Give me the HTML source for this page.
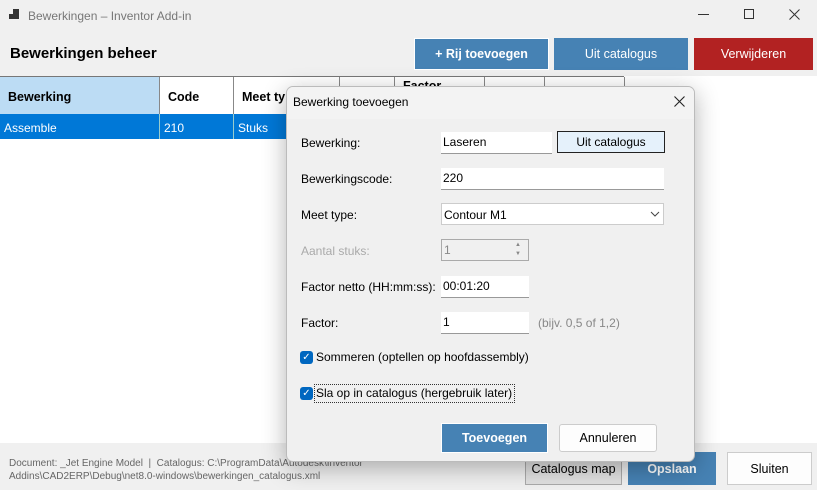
<!DOCTYPE html>
<html><head><meta charset="utf-8"><style>
*{box-sizing:border-box;margin:0;padding:0}
body{width:817px;height:490px;overflow:hidden;background:#f0f0f0;font-family:"Liberation Sans",sans-serif;font-size:12px;color:#000;position:relative}
.a{position:absolute}
.btn{position:absolute;color:#fff;display:flex;align-items:center;justify-content:center;font-size:12.5px}
.field{position:absolute;background:#fff;border-bottom:1px solid #999;padding:3px 2px;font-size:12px;height:22px}
.lbl{position:absolute;left:301px;font-size:12px}
.cb{position:absolute;left:300px;width:13px;height:13px;background:#0067c0;border-radius:3px;color:#fff;font-size:10px;line-height:13px;text-align:center}
.th{position:absolute;top:77px;height:37px;border-right:1px solid #888;font-weight:bold;font-size:12.5px;padding:13px 8px;background:#fff}
</style></head><body>
<div class="a" style="left:0;top:0;width:817px;height:31px;background:#f0f0f0"></div>
<svg class="a" style="left:9px;top:9px" width="12" height="12"><rect x="4" y="0" width="6" height="10" fill="#333"/><rect x="0" y="5" width="4" height="5" fill="#333"/></svg>
<div class="a" style="left:28px;top:9px;color:#777;font-size:12px">Bewerkingen – Inventor Add-in</div>
<div class="a" style="left:698px;top:14px;width:11px;height:1px;background:#333"></div>
<div class="a" style="left:744px;top:9px;width:10px;height:10px;border:1px solid #333"></div>
<svg class="a" style="left:789px;top:9px" width="11" height="11"><path d="M0.5 0.5L10.5 10.5M10.5 0.5L0.5 10.5" stroke="#333" stroke-width="1"/></svg>
<div class="a" style="left:10px;top:45px;font-weight:bold;font-size:15px">Bewerkingen beheer</div>
<div class="btn" style="left:414px;top:38px;width:135px;height:32px;background:#4682b4;font-weight:bold;border:1px solid #fff">+ Rij toevoegen</div>
<div class="btn" style="left:554px;top:38px;width:134px;height:32px;background:#4682b4">Uit catalogus</div>
<div class="btn" style="left:694px;top:38px;width:119px;height:32px;background:#b22222">Verwijderen</div>
<div class="a" style="left:0;top:76px;width:817px;height:367px;background:#fff"></div>
<div class="a" style="left:0;top:76px;width:624px;height:1px;background:#777"></div>
<div class="th" style="left:0;width:160px;background:#bcdcf4">Bewerking</div>
<div class="th" style="left:160px;width:74px">Code</div>
<div class="th" style="left:234px;width:106px">Meet type</div>
<div class="th" style="left:340px;width:55px"></div>
<div class="th" style="left:395px;width:90px;padding-top:2px">Factor</div>
<div class="th" style="left:485px;width:60px"></div>
<div class="th" style="left:545px;width:80px"></div>
<div class="a" style="left:0;top:114px;width:624px;height:25px;background:#0078d7;color:#fff"></div>
<div class="a" style="left:4px;top:121px;color:#fff">Assemble</div>
<div class="a" style="left:159px;top:114px;width:1px;height:25px;background:#9cc"></div>
<div class="a" style="left:164px;top:121px;color:#fff">210</div>
<div class="a" style="left:233px;top:114px;width:1px;height:25px;background:#9cc"></div>
<div class="a" style="left:238px;top:121px;color:#fff">Stuks</div>
<div class="a" style="left:0;top:443px;width:817px;height:47px;background:#f0f0f0"></div>
<div class="a" style="left:9px;top:457px;font-size:10px;color:#666;line-height:13px">Document: _Jet Engine Model &nbsp;| &nbsp;Catalogus: C:\ProgramData\Autodesk\Inventor<br>Addins\CAD2ERP\Debug\net8.0-windows\bewerkingen_catalogus.xml</div>
<div class="btn" style="left:525px;top:452px;width:97px;height:33px;background:#e1e1e1;color:#000;border:1px solid #aaa">Catalogus map</div>
<div class="btn" style="left:628px;top:452px;width:88px;height:33px;background:#4682b4;font-weight:bold">Opslaan</div>
<div class="btn" style="left:727px;top:452px;width:85px;height:33px;background:#fdfdfd;color:#000;border:1px solid #ccc">Sluiten</div>
<!-- dialog -->
<div class="a" style="left:286px;top:86px;width:409px;height:376px;background:#f0f0f0;border:1px solid #bbb;border-radius:7px;box-shadow:0 6px 24px rgba(0,0,0,.3);overflow:hidden">
<div style="height:32px;background:#f3f3f3"></div></div>
<div class="a" style="left:293px;top:95px;font-size:12px">Bewerking toevoegen</div>
<svg class="a" style="left:674px;top:96px" width="11" height="11"><path d="M0.5 0.5L10.5 10.5M10.5 0.5L0.5 10.5" stroke="#222" stroke-width="1.1"/></svg>
<div class="lbl" style="top:136px">Bewerking:</div>
<div class="field" style="left:441px;top:132px;width:111px">Laseren</div>
<div class="btn" style="left:557px;top:131px;width:108px;height:22px;background:#e5f1fb;color:#000;border:1px solid #222;font-size:12px">Uit catalogus</div>
<div class="lbl" style="top:172px">Bewerkingscode:</div>
<div class="field" style="left:441px;top:168px;width:223px">220</div>
<div class="lbl" style="top:208px">Meet type:</div>
<div class="field" style="left:441px;top:203px;width:223px;border:1px solid #ccc;padding-top:4px">Contour M1</div>
<svg class="a" style="left:650px;top:210px" width="10" height="8"><path d="M1 2l4 4 4-4" stroke="#444" fill="none"/></svg>
<div class="lbl" style="top:244px;color:#aaa">Aantal stuks:</div>
<div class="field" style="left:441px;top:239px;width:88px;border:1px solid #aaa;color:#888;background:#f0f0f0">1</div>
<div class="a" style="left:515px;top:241px;font-size:6px;color:#888;line-height:9px">▲<br>▼</div>
<div class="lbl" style="top:280px">Factor netto (HH:mm:ss):</div>
<div class="field" style="left:441px;top:276px;width:88px">00:01:20</div>
<div class="lbl" style="top:316px">Factor:</div>
<div class="field" style="left:441px;top:312px;width:88px">1</div>
<div class="a" style="left:538px;top:316px;color:#888">(bijv. 0,5 of 1,2)</div>
<div class="cb" style="top:351px">✓</div>
<div class="a" style="left:316px;top:350px">Sommeren (optellen op hoofdassembly)</div>
<div class="cb" style="top:387px">✓</div>
<div class="a" style="left:314px;top:384px;border:1px dotted #333;padding:1px 2px 2px 1px">Sla op in catalogus (hergebruik later)</div>
<div class="btn" style="left:441px;top:423px;width:107px;height:30px;background:#4682b4;font-weight:bold;border:1px solid #fff">Toevoegen</div>
<div class="btn" style="left:559px;top:424px;width:98px;height:28px;background:#fdfdfd;color:#000;border:1px solid #ccc;border-radius:3px">Annuleren</div>
</body></html>
